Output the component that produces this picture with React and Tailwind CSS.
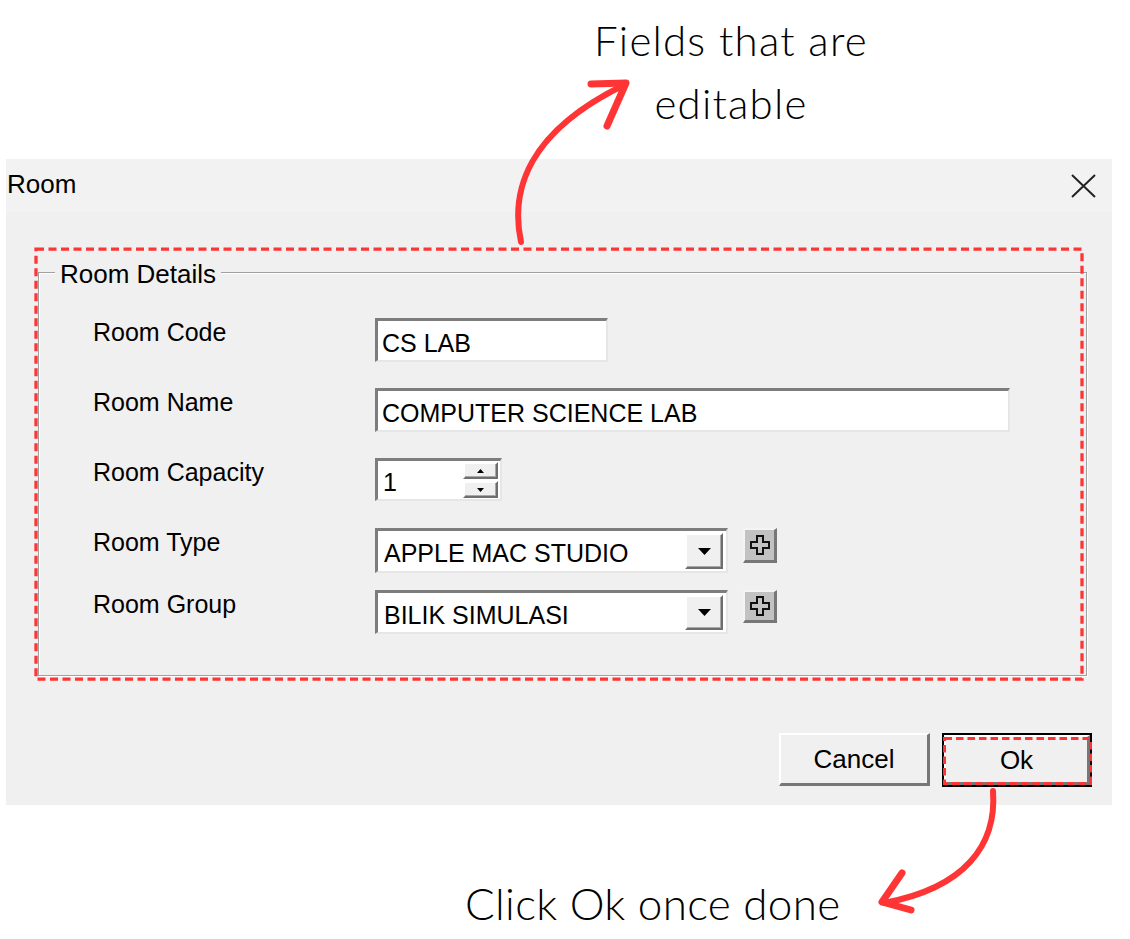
import React from "react";

const sunken =
  "bg-white border-t-[3px] border-l-[3px] border-r-2 border-b-2 border-t-[#7d7d7d] border-l-[#7d7d7d] border-r-[#e6e6e6] border-b-[#e6e6e6]";

const raised =
  "bg-[#f0f0f0] border-t-2 border-l-2 border-r-2 border-b-2 border-t-white border-l-white border-r-[#6e6e6e] border-b-[#6e6e6e] shadow-[inset_-1px_-1px_0_#a8a8a8]";

function Label({ children }) {
  return <div className="w-[282px] shrink-0 pt-[2px] text-[25px] leading-[25px]">{children}</div>;
}

function TextBox({ value, className }) {
  return (
    <div className={`${sunken} ${className} flex items-center pl-[4px] pt-[5px] text-[25px] leading-[25px]`}>
      {value}
    </div>
  );
}

function ComboBox({ value }) {
  return (
    <div className={`${sunken} w-[353px] h-full flex`}>
      <div className="flex-1 flex items-center pl-[6px] pt-[5px] text-[25px] leading-[25px]">{value}</div>
      <div className={`${raised} w-[38px] my-[2px] mr-[3px] flex items-center justify-center`}>
        <svg width="13" height="7" viewBox="0 0 13 7">
          <polygon points="0,0 13,0 6.5,7" fill="#000" />
        </svg>
      </div>
    </div>
  );
}

function PlusButton({ height }) {
  return (
    <div
      className={`ml-[15px] w-[34px] ${height} bg-[#c2c2c2] border-t-2 border-l-2 border-r-[3px] border-b-[3px] border-t-[#f4f4f4] border-l-[#f4f4f4] border-r-[#777] border-b-[#777] flex items-center justify-center`}
    >
      <svg width="20" height="20" viewBox="0 0 20 20">
        <path d="M7 1 H13 V7 H19 V13 H13 V19 H7 V13 H1 V7 H7 Z" fill="none" stroke="#111" strokeWidth="2" />
      </svg>
    </div>
  );
}

function Spinner() {
  return (
    <div className="w-[35px] mr-[2px] py-[1px] flex flex-col gap-[2px]">
      <div className={`${raised} flex-1 flex items-center justify-center`}>
        <svg width="7" height="4" viewBox="0 0 7 4">
          <polygon points="3.5,0 7,4 0,4" fill="#000" />
        </svg>
      </div>
      <div className={`${raised} flex-1 flex items-center justify-center`}>
        <svg width="7" height="4" viewBox="0 0 7 4">
          <polygon points="0,0 7,0 3.5,4" fill="#000" />
        </svg>
      </div>
    </div>
  );
}

export default function App() {
  return (
    <div className="relative w-[1130px] h-[939px] bg-white overflow-hidden text-black">
      {/* note above the dialog */}
      <div className="h-[159px]">
        <div className="ml-[531px] w-[400px] pt-[9px] text-center font-['Lato','Open_Sans',sans-serif] font-light tracking-[1.2px] text-[42px] leading-[63px]">
          Fields that are
          <br />
          editable
        </div>
      </div>

      {/* dialog */}
      <div className="ml-[6px] w-[1106px] h-[646px] flex flex-col font-['Liberation_Sans',Arial,sans-serif]">
        <div className="h-[53px] bg-[#f2f2f2] flex items-center justify-between pl-[1px] pr-[16px]">
          <span className="text-[26px] leading-[30px] -mt-[3px]">Room</span>
          <svg width="25" height="24" viewBox="0 0 25 24">
            <path d="M1 1 L24 23 M24 1 L1 23" stroke="#222" strokeWidth="2" />
          </svg>
        </div>

        <div className="flex-1 bg-[#f0f0f0] flex flex-col">
          <div className="relative mt-[60px] ml-[32px] w-[1049px] h-[404px] border border-[#a0a0a0] shadow-[inset_1px_1px_0_#fff,1px_1px_0_#fff]">
            <span className="absolute -top-[14px] left-[16px] bg-[#f0f0f0] px-[5px] text-[26px] leading-[30px]">
              Room Details
            </span>

            <div className="flex flex-col pl-[54px] pt-[45px]">
              <div className="flex h-[44px]">
                <Label>Room Code</Label>
                <TextBox value="CS LAB" className="w-[233px]" />
              </div>
              <div className="flex h-[44px] mt-[26px]">
                <Label>Room Name</Label>
                <TextBox value="COMPUTER SCIENCE LAB" className="w-[635px]" />
              </div>
              <div className="flex h-[43px] mt-[26px]">
                <Label>Room Capacity</Label>
                <div className={`${sunken} w-[127px] flex`}>
                  <div className="flex-1 flex items-center pl-[5px] pt-[5px] text-[25px] leading-[25px]">1</div>
                  <Spinner />
                </div>
              </div>
              <div className="flex items-start h-[45px] mt-[27px]">
                <Label>Room Type</Label>
                <ComboBox value="APPLE MAC STUDIO" />
                <PlusButton height="h-[35px]" />
              </div>
              <div className="flex items-start h-[44px] mt-[17px]">
                <Label>Room Group</Label>
                <ComboBox value="BILIK SIMULASI" />
                <PlusButton height="h-[33px]" />
              </div>
            </div>
          </div>

          <div className="flex justify-end gap-[12px] mt-[57px] pr-[20px]">
            <button className="w-[151px] h-[53px] bg-[#f0f0f0] border-t-2 border-l-2 border-r-[3px] border-b-[3px] border-t-white border-l-white border-r-[#777] border-b-[#777] text-[26px] leading-[30px]">
              Cancel
            </button>
            <button className="w-[150px] h-[54px] border-2 border-black">
              <div className="h-full bg-[#f0f0f0] border-t-2 border-l-2 border-r-[3px] border-b-[3px] border-t-white border-l-white border-r-[#777] border-b-[#777] flex items-center justify-center text-[26px] leading-[30px]">
                Ok
              </div>
            </button>
          </div>
        </div>
      </div>

      {/* note below the dialog */}
      <div className="mt-[72px] ml-[465px] font-['Lato','Open_Sans',sans-serif] font-light tracking-[0.3px] text-[44px] leading-[53px]">
        Click Ok once done
      </div>

      {/* red annotation marks */}
      <svg className="absolute inset-0 pointer-events-none" width="1130" height="939" viewBox="0 0 1130 939">
        <rect x="36" y="249.2" width="1046" height="430" fill="none" stroke="#ff3535" strokeWidth="3.3" strokeDasharray="8 4.5" />
        <rect x="944.5" y="738.5" width="146" height="45" fill="none" stroke="#ff3535" strokeWidth="3" strokeDasharray="7.5 4" />
        <path d="M521 242 C510 190 528 132 624 85" fill="none" stroke="#ff3535" strokeWidth="6" strokeLinecap="round" />
        <path d="M591 84 L626 83 L607 126" fill="none" stroke="#ff3535" strokeWidth="7" strokeLinecap="round" strokeLinejoin="round" />
        <path d="M993 791 C997 845 965 888 884 903" fill="none" stroke="#ff3535" strokeWidth="6" strokeLinecap="round" />
        <path d="M902 873 L882 902 L911 910" fill="none" stroke="#ff3535" strokeWidth="7" strokeLinecap="round" strokeLinejoin="round" />
      </svg>
    </div>
  );
}
